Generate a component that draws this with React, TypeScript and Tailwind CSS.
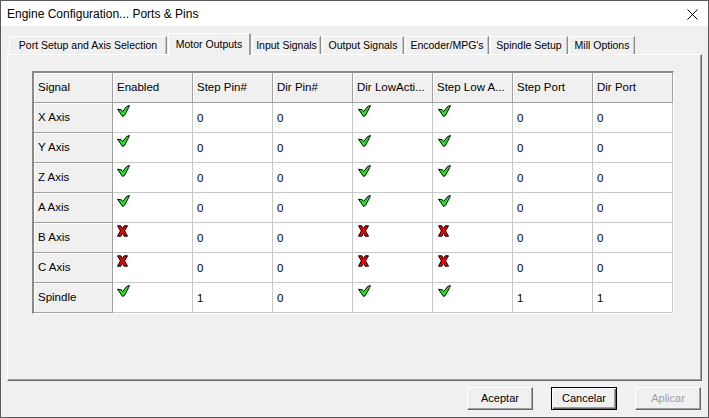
import React from "react";

const Check = () => (
  <svg width="13" height="12" viewBox="0 0 13 12" className="block">
    <path
      d="M0.5 4.2 L4.2 4.8 L5.8 6.4 L9.6 1.6 L12.4 0.5 L11.6 2.6 L7.6 10.2 L5.6 11.5 L4 9.2 Z"
      fill="#1ee61e"
      stroke="#000"
      strokeWidth="1"
      strokeLinejoin="miter"
    />
  </svg>
);

const Cross = () => (
  <svg width="11" height="12" viewBox="0 0 11 12" className="block">
    <path
      d="M0.5 0.8 L3.8 0.8 L5.5 3.6 L7.2 0.8 L10.5 0.8 L7.6 5.8 L10.5 11.2 L7.2 11.2 L5.5 8.2 L3.8 11.2 L0.5 11.2 L3.4 5.8 Z"
      fill="#f00000"
      stroke="#000"
      strokeWidth="1"
    />
  </svg>
);

type Row = [string, boolean, string, string, boolean, boolean, string, string];

const rows: Row[] = [
  ["X Axis", true, "0", "0", true, true, "0", "0"],
  ["Y Axis", true, "0", "0", true, true, "0", "0"],
  ["Z Axis", true, "0", "0", true, true, "0", "0"],
  ["A Axis", true, "0", "0", true, true, "0", "0"],
  ["B Axis", false, "0", "0", false, false, "0", "0"],
  ["C Axis", false, "0", "0", false, false, "0", "0"],
  ["Spindle", true, "1", "0", true, true, "1", "1"],
];

const headers = [
  "Signal",
  "Enabled",
  "Step Pin#",
  "Dir Pin#",
  "Dir LowActi...",
  "Step Low A...",
  "Step Port",
  "Dir Port",
];

const tabs: { label: string; ml: string; w: string; selected?: boolean }[] = [
  { label: "Port Setup and Axis Selection", ml: "ml-[2px]", w: "w-[158px]" },
  { label: "Motor Outputs", ml: "ml-[1px]", w: "w-[83px]", selected: true },
  { label: "Input Signals", ml: "ml-[1px]", w: "w-[69px]" },
  { label: "Output Signals", ml: "ml-[1px]", w: "w-[82px]" },
  { label: "Encoder/MPG's", ml: "ml-[1px]", w: "w-[84px]" },
  { label: "Spindle Setup", ml: "ml-[1px]", w: "w-[78px]" },
  { label: "Mill Options", ml: "ml-[1px]", w: "w-[66px]" },
];

function HeaderCell({ children }: { children: React.ReactNode }) {
  return (
    <div className="h-[30px] flex items-center pl-[4px] bg-[#f0f0f0] border-r border-b border-[#a0a0a0] shadow-[inset_1px_1px_0_#ffffff] whitespace-nowrap overflow-hidden">
      {children}
    </div>
  );
}

function DataCell({ children, icon }: { children?: React.ReactNode; icon?: boolean }) {
  return (
    <div
      className={
        icon
          ? "h-[30px] flex items-start pt-[2px] pl-[4px] bg-white border-r border-b border-[#c8c8c8]"
          : "h-[30px] flex items-center pl-[4px] pt-[2px] bg-white border-r border-b border-[#c8c8c8]"
      }
    >
      {children}
    </div>
  );
}

function Btn({ label, variant }: { label: string; variant?: "default" | "disabled" }) {
  if (variant === "default") {
    return (
      <div className="w-[66px] h-[23px] border border-black bg-[#f0f0f0] shadow-[inset_1px_1px_0_#ffffff,inset_-1px_-1px_0_#696969,inset_-2px_-2px_0_#a0a0a0] flex items-center justify-center text-[11px] text-black">
        {label}
      </div>
    );
  }
  return (
    <div
      className={
        "w-[66px] h-[23px] border border-t-white border-l-white border-r-[#696969] border-b-[#696969] bg-[#f0f0f0] shadow-[inset_-1px_-1px_0_#a0a0a0] flex items-center justify-center text-[11px] " +
        (variant === "disabled" ? "text-[#a0a0a0]" : "text-black")
      }
    >
      {label}
    </div>
  );
}

export default function App() {
  return (
    <div className="w-[709px] h-[418px] border border-[#5a5a5a] bg-[#f0f0f0] flex flex-col [font-family:'Liberation_Sans',Arial,sans-serif] text-black overflow-hidden">
      {/* Title bar */}
      <div className="h-[25px] bg-white flex items-center justify-between pl-[6px] pr-[10px] shrink-0">
        <span className="text-[12px] leading-none">Engine Configuration... Ports &amp; Pins</span>
        <svg width="11" height="11" viewBox="0 0 11 11" className="mt-[2px]">
          <path d="M0.5 0.5 L10.5 10.5 M10.5 0.5 L0.5 10.5" stroke="#000" strokeWidth="1" />
        </svg>
      </div>

      {/* Body */}
      <div className="flex-1 flex flex-col pl-[6px] pr-[7px] pt-[7px]">
        {/* Tabs */}
        <div className="flex items-end h-[21px] relative z-10">
          {tabs.map((t) =>
            t.selected ? (
              <div
                key={t.label}
                className={`${t.ml} ${t.w} h-[22px] -mb-px bg-[#f0f0f0] border-t border-l border-white border-r-2 border-r-[#a0a0a0] flex items-start justify-center pt-[3px] text-[10.5px] whitespace-nowrap`}
              >
                {t.label}
              </div>
            ) : (
              <div
                key={t.label}
                className={`${t.ml} ${t.w} h-[18px] bg-[#f0f0f0] border-t border-l border-white border-r border-r-[#8a8a8a] shadow-[inset_-1px_0_0_#c8c8c8] flex items-center justify-center text-[10.5px] whitespace-nowrap`}
              >
                {t.label}
              </div>
            )
          )}
        </div>

        {/* Panel */}
        <div className="w-[695px] h-[327px] border-t border-l border-white border-r border-b border-r-[#696969] border-b-[#696969] shadow-[inset_-1px_-1px_0_#a0a0a0] pl-[24px] pt-[16px]">
          <div className="w-[642px] border-l-2 border-t-2 border-l-[#8a8a8a] border-t-[#8a8a8a] border-r border-b border-r-white border-b-white grid grid-cols-[79px_repeat(7,80px)] text-[11.5px]">
            {headers.map((h) => (
              <HeaderCell key={h}>{h}</HeaderCell>
            ))}
            {rows.map((r) => (
              <React.Fragment key={r[0]}>
                <HeaderCell>{r[0]}</HeaderCell>
                <DataCell icon>{r[1] ? <Check /> : <Cross />}</DataCell>
                <DataCell>{r[2]}</DataCell>
                <DataCell>{r[3]}</DataCell>
                <DataCell icon>
                  <div className="pl-px">{r[4] ? <Check /> : <Cross />}</div>
                </DataCell>
                <DataCell icon>
                  <div className="pl-px">{r[5] ? <Check /> : <Cross />}</div>
                </DataCell>
                <DataCell>{r[6]}</DataCell>
                <DataCell>{r[7]}</DataCell>
              </React.Fragment>
            ))}
          </div>
        </div>

        {/* Buttons */}
        <div className="flex justify-end gap-[18px] mt-[6px] pr-0">
          <Btn label="Aceptar" />
          <Btn label="Cancelar" variant="default" />
          <Btn label="Aplicar" variant="disabled" />
        </div>
      </div>
    </div>
  );
}
